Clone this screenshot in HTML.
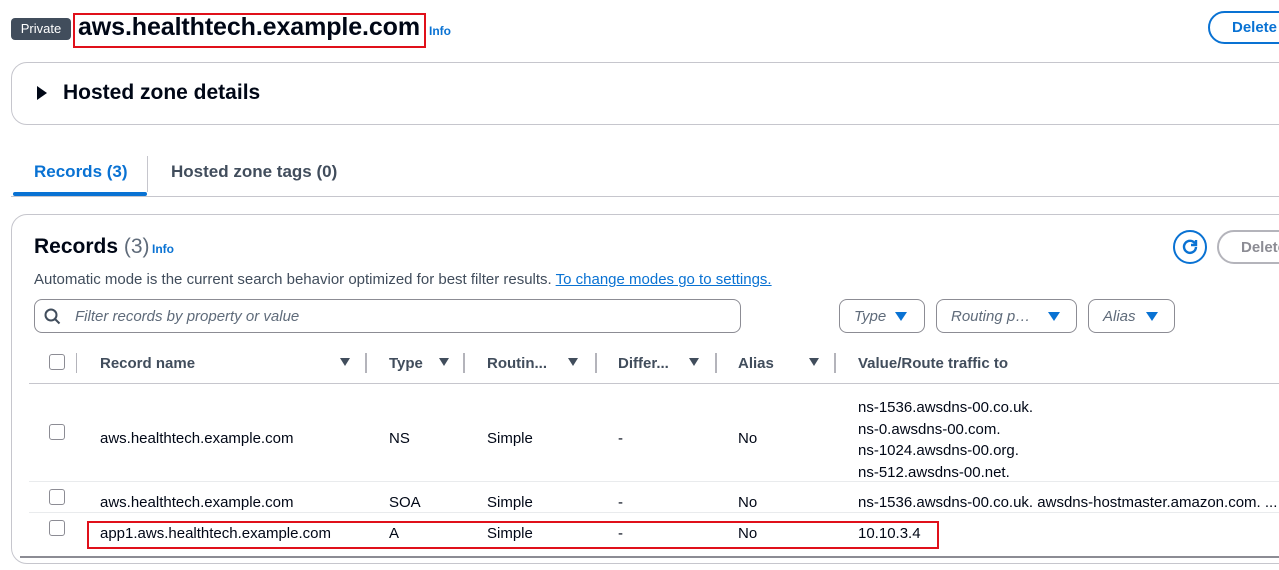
<!DOCTYPE html><html><head><style>
*{box-sizing:border-box;margin:0;padding:0}
body{width:1279px;height:570px;overflow:hidden;background:#fff;font-family:"Liberation Sans",sans-serif;color:#000716;position:relative;font-size:15px}
.a{position:absolute;white-space:nowrap}
.panel{position:absolute;border:1px solid #c6c6cd;border-radius:16px;background:#fff}
.th{font-weight:bold;color:#414d5c;top:355px}
.sep{position:absolute;width:2px;height:20px;background:#b4b4bb;top:353px}
.cb{position:absolute;width:16px;height:16px;border:1.5px solid #8c8c94;border-radius:3px;left:49px;background:#fff}
.tri{position:absolute;top:358px;width:0;height:0;border-left:5px solid transparent;border-right:5px solid transparent;border-top:8px solid #414d5c}
.pill{position:absolute;height:34px;top:299px;border:1px solid #8c8c94;border-radius:8px;font-style:italic;color:#5f6b7a;padding:8px 14px}
.bt{position:absolute;top:312px;width:0;height:0;border-left:6px solid transparent;border-right:6px solid transparent;border-top:9px solid #0972d3}
.hl{position:absolute;border:2px solid #e0101a}
.td{top:430px}
</style></head><body>
<div class="a" style="left:11px;top:18px;width:60px;height:22px;background:#414d5c;color:#fff;border-radius:4px;font-size:13px;text-align:center;line-height:22px">Private</div>
<div class="hl" style="left:73px;top:13px;width:353px;height:35px"></div>
<div class="a" style="left:78px;top:13px;font-size:25px;font-weight:bold;letter-spacing:-0.1px">aws.healthtech.example.com</div>
<div class="a" style="left:429px;top:24px;font-size:12px;font-weight:bold;color:#0972d3">Info</div>
<div class="a" style="left:1208px;top:11px;width:100px;height:33px;border:2px solid #0972d3;border-radius:20px;color:#0972d3;font-weight:bold;padding:6px 0 0 22px">Delete</div>
<div class="panel" style="left:11px;top:62px;width:1290px;height:63px"></div>
<div class="a" style="left:37px;top:86px;width:0;height:0;border-top:7px solid transparent;border-bottom:7px solid transparent;border-left:10px solid #000716"></div>
<div class="a" style="left:63px;top:81px;font-size:21px;font-weight:bold">Hosted zone details</div>
<div class="a" style="left:34px;top:162px;font-size:17px;font-weight:bold;color:#0972d3">Records (3)</div>
<div class="a" style="left:147px;top:156px;width:1px;height:36px;background:#c6c6cd"></div>
<div class="a" style="left:171px;top:162px;font-size:17px;font-weight:bold;color:#414d5c">Hosted zone tags (0)</div>
<div class="a" style="left:11px;top:196px;width:1268px;height:1px;background:#c6c6cd"></div>
<div class="a" style="left:13px;top:192px;width:134px;height:4px;background:#0972d3;border-radius:2px"></div>
<div class="panel" style="left:11px;top:214px;width:1290px;height:350px"></div>
<div class="a" style="left:34px;top:235px;font-size:21px;font-weight:bold">Records <span style="font-weight:normal;color:#5f6b7a">(3)</span></div>
<div class="a" style="left:152px;top:242px;font-size:12px;font-weight:bold;color:#0972d3">Info</div>
<div class="a" style="left:1173px;top:230px;width:34px;height:34px;border:2px solid #0972d3;border-radius:50%"></div>
<svg class="a" style="left:1180px;top:237px" width="20" height="20" viewBox="0 0 20 20"><path d="M15 6.5A6 6 0 1 0 16 10" fill="none" stroke="#0972d3" stroke-width="2.4"/><path d="M16 3v5h-5" fill="none" stroke="#0972d3" stroke-width="2.4"/></svg>
<div class="a" style="left:1217px;top:230px;width:100px;height:34px;border:2px solid #b4b4bb;border-radius:20px;color:#8c8c94;font-weight:bold;padding:7px 0 0 22px">Delete</div>
<div class="a" style="left:34px;top:271px;color:#414d5c">Automatic mode is the current search behavior optimized for best filter results. <span style="color:#0972d3;text-decoration:underline">To change modes go to settings.</span></div>
<div class="a" style="left:34px;top:299px;width:707px;height:34px;border:1px solid #8c8c94;border-radius:8px"></div>
<svg class="a" style="left:44px;top:308px" width="17" height="17" viewBox="0 0 17 17"><circle cx="7" cy="7" r="5.5" fill="none" stroke="#414d5c" stroke-width="2"/><path d="M11 11l4.5 4.5" stroke="#414d5c" stroke-width="2"/></svg>
<div class="a" style="left:75px;top:308px;font-style:italic;color:#5f6b7a">Filter records by property or value</div>
<div class="pill" style="left:839px;width:86px">Type</div><div class="bt" style="left:895px"></div>
<div class="pill" style="left:936px;width:141px">Routing p…</div><div class="bt" style="left:1048px"></div>
<div class="pill" style="left:1088px;width:87px">Alias</div><div class="bt" style="left:1146px"></div>
<div class="cb" style="top:354px"></div>
<div class="sep" style="left:76px;width:1px"></div>
<div class="a th" style="left:100px">Record name</div><div class="tri" style="left:340px"></div><div class="sep" style="left:365px"></div>
<div class="a th" style="left:389px">Type</div><div class="tri" style="left:439px"></div><div class="sep" style="left:463px"></div>
<div class="a th" style="left:487px">Routin...</div><div class="tri" style="left:568px"></div><div class="sep" style="left:595px"></div>
<div class="a th" style="left:618px">Differ...</div><div class="tri" style="left:689px"></div><div class="sep" style="left:715px"></div>
<div class="a th" style="left:738px">Alias</div><div class="tri" style="left:809px"></div><div class="sep" style="left:834px"></div>
<div class="a th" style="left:858px">Value/Route traffic to</div>
<div class="a" style="left:29px;top:383px;width:1250px;height:1px;background:#c6c6cd"></div>
<div class="cb" style="top:424px"></div>
<div class="a td" style="left:100px">aws.healthtech.example.com</div><div class="a td" style="left:389px">NS</div><div class="a td" style="left:487px">Simple</div><div class="a td" style="left:618px">-</div><div class="a td" style="left:738px">No</div>
<div class="a" style="left:858px;top:397px;line-height:21.5px">ns-1536.awsdns-00.co.uk.<br>ns-0.awsdns-00.com.<br>ns-1024.awsdns-00.org.<br>ns-512.awsdns-00.net.</div>
<div class="a" style="left:29px;top:481px;width:1250px;height:1px;background:#e9ebed"></div>
<div class="cb" style="top:489px"></div>
<div class="a" style="left:100px;top:494px">aws.healthtech.example.com</div><div class="a" style="left:389px;top:494px">SOA</div><div class="a" style="left:487px;top:494px">Simple</div><div class="a" style="left:618px;top:494px">-</div><div class="a" style="left:738px;top:494px">No</div>
<div class="a" style="left:858px;top:494px">ns-1536.awsdns-00.co.uk. awsdns-hostmaster.amazon.com. ...</div>
<div class="a" style="left:29px;top:512px;width:1250px;height:1px;background:#e9ebed"></div>
<div class="cb" style="top:520px"></div>
<div class="hl" style="left:87px;top:521px;width:852px;height:28px"></div>
<div class="a" style="left:100px;top:525px">app1.aws.healthtech.example.com</div><div class="a" style="left:389px;top:525px">A</div><div class="a" style="left:487px;top:525px">Simple</div><div class="a" style="left:618px;top:525px">-</div><div class="a" style="left:738px;top:525px">No</div><div class="a" style="left:858px;top:525px">10.10.3.4</div>
<div class="a" style="left:20px;top:556px;width:1259px;height:2px;background:#8c8c94"></div>
</body></html>
